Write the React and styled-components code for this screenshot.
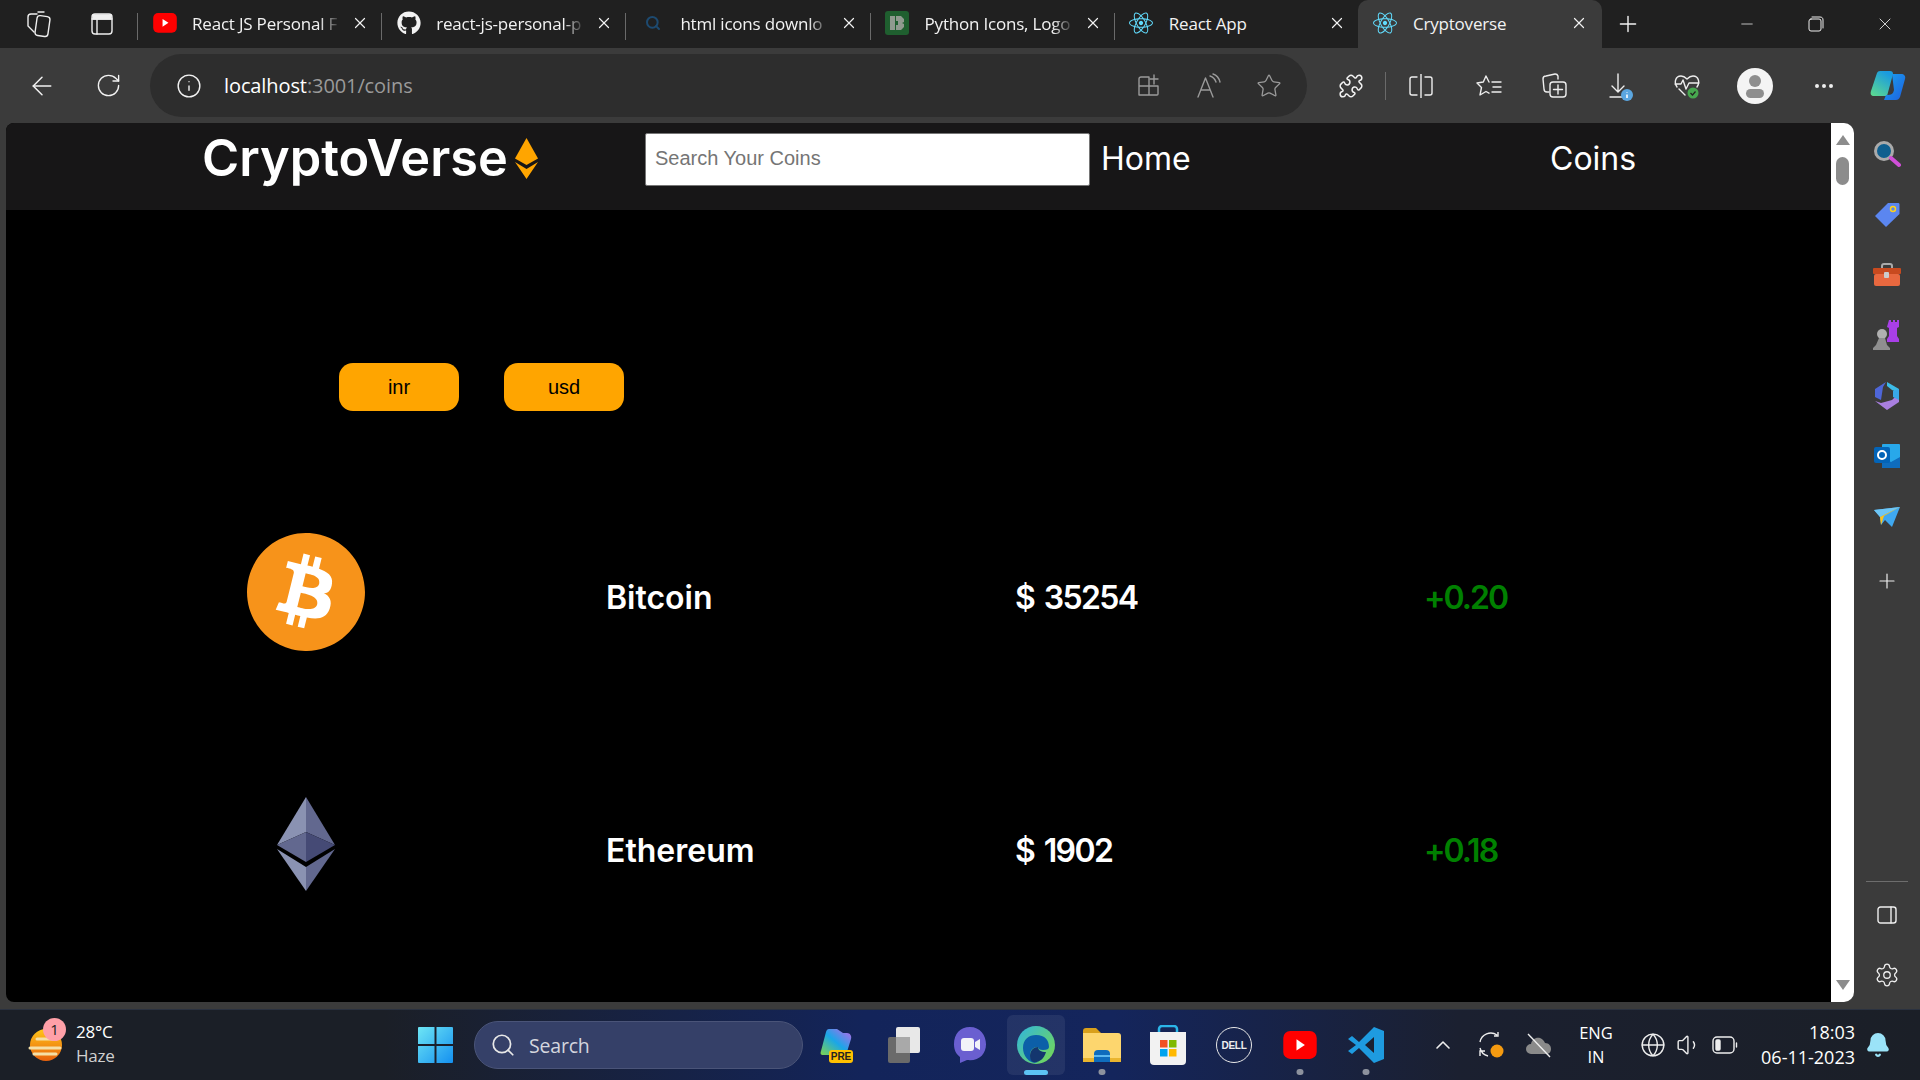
import React from "react";
import styled, { createGlobalStyle } from "styled-components";
import {
  ArrowLeft,
  RotateCw,
  Info,
  Star,
  Puzzle,
  Plus,
  X,
  Minus,
  Search,
  ChevronUp,
  Settings,
  Ellipsis,
  Globe,
  Volume1,
  Bell,
} from "lucide-react";
import { FaGithub, FaReact } from "react-icons/fa";

const GlobalStyle = createGlobalStyle`
  html, body {
    margin: 0;
    padding: 0;
    height: 100%;
    overflow: hidden;
    background: #202020;
  }
  * {
    box-sizing: border-box;
  }
`;

const UI_FONT = `"Open Sans", "Noto Sans", sans-serif`;

const Screen = styled.div`
  width: 1920px;
  height: 1080px;
  display: flex;
  flex-direction: column;
  font-family: ${UI_FONT};
  color: #fff;
`;

/* tab strip */
const TabStrip = styled.div`
  height: 48px;
  flex: none;
  background: #202020;
  display: flex;
  align-items: stretch;
`;

const StripIcons = styled.div`
  width: 137px;
  display: flex;
  align-items: center;
  padding-left: 6px;
  flex: none;
`;

const StripIcon = styled.div`
  width: 64px;
  display: flex;
  justify-content: center;
  align-items: center;
`;

const Tab = styled.div`
  width: ${(p) => p.$w || 244.2}px;
  flex: none;
  display: flex;
  align-items: center;
  padding: 0 ${(p) => (p.$active ? 11 : 9)}px 2px 15px;
  position: relative;
  background: ${(p) => (p.$active ? "#3b3b3b" : "transparent")};
  border-radius: ${(p) => (p.$active ? "10px 10px 0 0" : "0")};
  &::before {
    content: "";
    display: ${(p) => (p.$active ? "none" : "block")};
    position: absolute;
    left: 0;
    top: 13px;
    height: 27px;
    width: 1px;
    background: #6a6a6a;
  }
`;

const Favicon = styled.div`
  width: 25px;
  height: 25px;
  flex: none;
  display: flex;
  align-items: center;
  justify-content: center;
`;

const TabTitle = styled.div`
  flex: 1;
  margin: 0 4px 0 15px;
  font-size: 17px;
  white-space: nowrap;
  letter-spacing: -0.2px;
  color: #f2f2f2;
  mask-image: ${(p) =>
    p.$fade ? "linear-gradient(90deg, #000 84%, transparent 98%)" : "none"};
`;

const TabClose = styled.div`
  width: 24px;
  display: flex;
  justify-content: center;
  flex: none;
`;

const NewTab = styled.div`
  width: 52px;
  display: flex;
  align-items: center;
  justify-content: center;
  flex: none;
`;

const WindowControls = styled.div`
  margin-left: auto;
  display: flex;
  align-items: center;
  padding-right: 1px;
`;

const WinButton = styled.div`
  width: 69px;
  display: flex;
  justify-content: center;
  align-items: center;
`;

/* toolbar */
const Toolbar = styled.div`
  height: 75px;
  flex: none;
  background: #3b3b3b;
  display: flex;
  align-items: center;
`;

const NavButton = styled.div`
  width: ${(p) => p.$w}px;
  flex: none;
  display: flex;
  justify-content: center;
  align-items: center;
`;

const AddressBar = styled.div`
  width: 1157px;
  height: 63px;
  flex: none;
  margin: 0 10px 0 18px;
  border-radius: 32px;
  background: #2d2d2d;
  display: flex;
  align-items: center;
  padding-left: 26px;
  padding-right: 8px;
`;

const UrlText = styled.div`
  margin-left: 22px;
  font-size: 20px;
  letter-spacing: -0.1px;
  color: #fff;
  span {
    color: #9a9a9a;
  }
`;

const AddressIcons = styled.div`
  margin-left: auto;
  display: flex;
  align-items: center;
`;

const AddressIcon = styled.div`
  width: 60px;
  display: flex;
  justify-content: center;
`;

const ToolDivider = styled.div`
  width: 1px;
  height: 28px;
  background: #6a6a6a;
  flex: none;
`;

const Avatar = styled.div`
  width: 36px;
  height: 36px;
  border-radius: 50%;
  background: #f4f4f4;
  position: relative;
  overflow: hidden;
  &::before {
    content: "";
    position: absolute;
    left: 12px;
    top: 7px;
    width: 12px;
    height: 12px;
    border-radius: 50%;
    background: #8e8e8e;
  }
  &::after {
    content: "";
    position: absolute;
    left: 9px;
    top: 21px;
    width: 18px;
    height: 9px;
    border-radius: 5px;
    background: #8e8e8e;
  }
`;

/* middle */
const Middle = styled.div`
  flex: 1;
  min-height: 0;
  display: flex;
  background: #3b3b3b;
  padding: 0 0 7px 6px;
`;

const Page = styled.main`
  width: 1825px;
  flex: none;
  background: #000;
  overflow: hidden;
  border-radius: 8px 0 0 8px;
  font-family: Inter, "Liberation Sans", sans-serif;
`;

const SiteNav = styled.nav`
  height: 87px;
  background: #171617;
  display: flex;
  align-items: center;
  padding-left: 196px;
`;

const Logo = styled.div`
  width: 443px;
  flex: none;
  display: flex;
  align-items: center;
  gap: 7px;
  font-size: 50.5px;
  font-weight: 600;
  line-height: 1;
  position: relative;
  top: -8px;
`;

const SearchInput = styled.input`
  width: 445px;
  height: 53px;
  flex: none;
  position: relative;
  top: -7px;
  border: 1px solid #767676;
  border-radius: 2px;
  padding: 0 9px 2px;
  background: #fff;
  font-family: "Liberation Sans", Arial, sans-serif;
  font-size: 20px;
  &::placeholder {
    color: #757575;
  }
`;

const NavLink = styled.a`
  width: 449px;
  flex: none;
  font-size: 32px;
  font-weight: 400;
  position: relative;
  top: -8px;
  color: #fff;
  &:first-of-type {
    margin-left: 11px;
  }
`;

const CurrencyBar = styled.div`
  display: flex;
  gap: 45px;
  padding: 153px 0 0 333px;
`;

const CurrencyButton = styled.button`
  width: 120px;
  height: 48px;
  border: none;
  border-radius: 14px;
  background: #ffa500;
  color: #000;
  font-family: "Liberation Sans", Arial, sans-serif;
  font-size: 20px;
  padding: 0;
`;

const CoinList = styled.div`
  padding: 54px 0 0 191px;
`;

const CoinRow = styled.div`
  height: 253px;
  display: grid;
  grid-template-columns: repeat(4, 409px);
  align-items: center;
`;

const CoinIcon = styled.div`
  width: 118px;
  height: 118px;
  margin-left: 50px;
  svg {
    display: block;
    width: 100%;
    height: 100%;
  }
`;

const CoinCell = styled.div`
  padding-top: 12px;
  font-size: 32px;
  font-weight: 600;
  white-space: nowrap;
  word-spacing: ${(p) => p.$gap || 0}px;
  letter-spacing: ${(p) => p.$track || 0}px;
  color: ${(p) => (p.$gain ? "#008000" : "#fff")};
`;

/* scrollbar */
const ScrollTrack = styled.div`
  width: 23px;
  flex: none;
  background: #fff;
  border-radius: 0 10px 10px 0;
  display: flex;
  flex-direction: column;
  align-items: center;
  padding-top: 12px;
  padding-bottom: 12px;
`;

const ScrollArrow = styled.div`
  width: 0;
  height: 0;
  border-left: 7px solid transparent;
  border-right: 7px solid transparent;
  ${(p) =>
    p.$down
      ? "border-top: 10px solid #8c8c8c; margin-top: auto;"
      : "border-bottom: 10px solid #8c8c8c;"}
`;

const ScrollThumb = styled.div`
  width: 13px;
  height: 28px;
  margin-top: 12px;
  border-radius: 7px;
  background: #8c8c8c;
`;

/* edge sidebar */
const SideBar = styled.aside`
  width: 66px;
  flex: none;
  display: flex;
  flex-direction: column;
  align-items: center;
  padding-top: 1px;
`;

const SideItem = styled.div`
  height: ${(p) => p.$h || 60.4}px;
  width: 100%;
  display: flex;
  align-items: center;
  justify-content: center;
  flex: none;
`;

const SideDivider = styled.div`
  width: 42px;
  height: 1px;
  background: #6d6d6d;
  margin-top: auto;
`;

/* taskbar */
const Taskbar = styled.footer`
  height: 71px;
  flex: none;
  display: flex;
  align-items: center;
  position: relative;
  border-top: 1px solid #2b3240;
  background: linear-gradient(
    90deg,
    #1b1f27 0%,
    #1b1f27 20%,
    #13245a 45%,
    #14255c 58%,
    #1b2030 76%,
    #1b1f27 100%
  );
`;

const Weather = styled.div`
  width: 396px;
  flex: none;
  padding-left: 28px;
  display: flex;
  align-items: center;
`;

const WeatherIcon = styled.div`
  width: 36px;
  height: 36px;
  position: relative;
  flex: none;
  display: flex;
  align-items: flex-end;
`;

const WeatherBadge = styled.div`
  position: absolute;
  left: 15px;
  top: -9px;
  width: 23px;
  height: 23px;
  border-radius: 50%;
  background: #ffa0a8;
  color: #222;
  font-size: 15px;
  line-height: 23px;
  text-align: center;
`;

const WeatherText = styled.div`
  margin: -3px 0 0 12px;
  font-size: 17px;
  line-height: 24px;
  letter-spacing: -0.2px;
`;

const WeatherSub = styled.div`
  color: #d0d0d0;
`;

const StartSlot = styled.div`
  width: 78px;
  flex: none;
  display: flex;
  justify-content: center;
`;

const TaskSearch = styled.div`
  width: 329px;
  height: 48px;
  flex: none;
  border-radius: 24px;
  background: #354068;
  border: 1px solid #4a5478;
  display: flex;
  align-items: center;
  padding-left: 15px;
  gap: 13px;
  font-size: 19.5px;
  letter-spacing: -0.2px;
  color: #d4d6de;
`;

const AppRow = styled.div`
  display: flex;
  margin-left: 2px;
  flex: none;
`;

const AppSlot = styled.div`
  width: 66px;
  height: 60px;
  position: relative;
  display: flex;
  align-items: center;
  justify-content: center;
  &::before {
    content: "";
    display: ${(p) => (p.$active ? "block" : "none")};
    position: absolute;
    inset: 0 4px;
    border-radius: 6px;
    background: rgba(255, 255, 255, 0.07);
  }
  &::after {
    content: "";
    display: ${(p) => (p.$dot || p.$active ? "block" : "none")};
    position: absolute;
    bottom: 0;
    left: 50%;
    transform: translateX(-50%);
    width: ${(p) => (p.$active ? "24px" : "7px")};
    height: ${(p) => (p.$active ? "5px" : "6px")};
    border-radius: 3px;
    background: ${(p) => (p.$active ? "#5cc3f5" : "#8d929e")};
  }
  svg {
    position: relative;
    z-index: 1;
  }
`;

const DellMark = styled.div`
  width: 36px;
  height: 36px;
  border-radius: 50%;
  border: 1.5px solid #e8e8e8;
  display: flex;
  align-items: center;
  justify-content: center;
  font-family: "Liberation Sans", sans-serif;
  font-size: 10px;
  font-weight: 700;
  letter-spacing: -0.3px;
  color: #eee;
`;

const Tray = styled.div`
  margin-left: auto;
  padding-right: 19px;
  display: flex;
  align-items: center;
  flex: none;
`;

const TraySlot = styled.div`
  width: ${(p) => p.$w || 48}px;
  flex: none;
  display: flex;
  align-items: center;
  justify-content: center;
`;

const Lang = styled.div`
  width: 66px;
  margin-right: 6px;
  flex: none;
  text-align: center;
  font-size: 16.5px;
  line-height: 24px;
`;

const Clock = styled.div`
  width: 112px;
  flex: none;
  text-align: right;
  font-size: 18px;
  line-height: 25px;
`;

/* drawings */
const Youtube = ({ size = 24 }) => (
  <svg width={size} height={size * 0.82} viewBox="0 0 24 20">
    <rect width="24" height="20" rx="5" fill="#f00" />
    <path d="M9.5 6l6 4-6 4z" fill="#fff" />
  </svg>
);

const BitcoinLogo = () => (
  <svg viewBox="0 0 64 64">
    <path
      fill="#f7931a"
      d="M63.033,39.744c-4.274,17.143-21.637,27.576-38.782,23.301C7.116,58.768-3.317,41.404,0.959,24.262 C5.23,7.117,22.594-3.317,39.734,0.957C56.879,5.23,67.311,22.596,63.032,39.744L63.033,39.744z"
    />
    <path
      fill="#fff"
      d="M46.103,27.444c0.637-4.258-2.605-6.547-7.038-8.074l1.438-5.768l-3.511-0.875l-1.4,5.616 c-0.923-0.23-1.871-0.447-2.813-0.662l1.41-5.653l-3.509-0.875l-1.439,5.766c-0.764-0.174-1.514-0.346-2.242-0.527l0.004-0.018 l-4.842-1.209l-0.934,3.75c0,0,2.605,0.597,2.55,0.634c1.422,0.355,1.679,1.296,1.636,2.042l-1.638,6.571 c0.098,0.025,0.225,0.061,0.365,0.117c-0.117-0.029-0.242-0.061-0.371-0.092l-2.296,9.205c-0.174,0.432-0.615,1.08-1.609,0.834 c0.035,0.051-2.552-0.637-2.552-0.637l-1.743,4.019l4.569,1.139c0.85,0.213,1.683,0.436,2.503,0.646l-1.453,5.834l3.507,0.875 l1.439-5.772c0.958,0.26,1.888,0.5,2.798,0.726l-1.434,5.745l3.511,0.875l1.453-5.823c5.987,1.133,10.489,0.676,12.384-4.739 c1.527-4.36-0.076-6.875-3.226-8.515C44.008,32.936,45.742,31.007,46.103,27.444L46.103,27.444z M38.081,38.693 c-1.085,4.36-8.426,2.003-10.806,1.412l1.928-7.729C31.583,32.97,39.215,34.147,38.081,38.693z M39.167,27.381 c-0.99,3.966-7.1,1.951-9.082,1.457l1.748-7.01C33.815,22.322,40.198,23.244,39.167,27.381z"
    />
  </svg>
);

const EthereumLogo = () => (
  <svg viewBox="0 1 118 118">
    <polygon points="59,12 30,60 59,47" fill="#8a92b2" />
    <polygon points="59,12 88,60 59,47" fill="#62688f" />
    <polygon points="30,60 59,47 59,77" fill="#62688f" />
    <polygon points="88,60 59,47 59,77" fill="#454a75" />
    <polygon points="30,64 59,82 59,106" fill="#8a92b2" />
    <polygon points="88,64 59,82 59,106" fill="#62688f" />
  </svg>
);

const LogoDiamond = () => (
  <svg width="23" height="41" viewBox="0 0 23 41">
    <polygon points="11.5,0 0,20.5 11.5,27 23,20.5" fill="#ffa500" />
    <polygon points="0,24 11.5,31 23,24 11.5,41" fill="#ffa500" />
  </svg>
);

const line = { fill: "none", stroke: "#eee", strokeWidth: 1.4, strokeLinecap: "round", strokeLinejoin: "round" };
const dim = { ...line, stroke: "#9a9a9a" };

const Workspaces = () => (
  <svg width="26" height="28" viewBox="0 0 26 28" {...line}>
    <rect x="11" y="6" width="13" height="20" rx="3" transform="rotate(8 17 16)" />
    <path d="M9 22L3 16V7c0-2 1-3 3-3h6M13 2h6" />
  </svg>
);

const TabPanel = () => (
  <svg width="22" height="24" viewBox="0 0 22 24" {...line}>
    <rect x="1" y="2" width="20" height="20" rx="3" />
    <path d="M1 7h20M6 7v15" />
    <path d="M2 3h18v4H2z" fill="#eee" />
  </svg>
);

const RestoreIcon = () => (
  <svg width="16" height="16" viewBox="0 0 16 16" {...line} strokeWidth="1">
    <rect x="1" y="3" width="12" height="12" rx="2" />
    <path d="M4 1h8c2 0 3 1 3 3v8" />
  </svg>
);

const TabGroupIcon = () => (
  <svg width="22" height="24" viewBox="0 0 22 24" {...dim}>
    <path d="M11 3H3a2 2 0 0 0-2 2v16h18a1 1 0 0 0 1-1v-8H1M11 3v18" />
    <path d="M16 1v9M12 5h8" />
  </svg>
);

const ReadAloud = () => (
  <svg width="26" height="26" viewBox="0 0 26 26" {...dim}>
    <path d="M2 24L9.5 5 17 24M5 17h9" />
    <path d="M14 3c3 1 5 3 6 6M17 1c3 1 6 4 7 8" />
  </svg>
);

const SplitIcon = () => (
  <svg width="24" height="24" viewBox="0 0 24 24" {...line}>
    <path d="M8 3H3a2 2 0 0 0-2 2v14a2 2 0 0 0 2 2h5M16 3h5a2 2 0 0 1 2 2v14a2 2 0 0 1-2 2h-5M12 0v24" />
  </svg>
);

const FavoritesIcon = () => (
  <svg width="26" height="24" viewBox="0 0 26 24" {...line}>
    <path d="M13 8L10 2 7.3 8 1 9l4.5 4.500L4 21l6-3.500 3 1.700" />
    <path d="M16 8h9M17 13h8M16 18h9" />
  </svg>
);

const CollectionsIcon = () => (
  <svg width="26" height="26" viewBox="0 0 26 26" {...line}>
    <path d="M7 19l-2 0a3 3 0 0 1-3-3L1 6a3 3 0 0 1 3-3l9-2a3 3 0 0 1 3 2v3" />
    <rect x="8" y="9" width="16" height="15" rx="3" />
    <path d="M16 12v9M11.5 16.5h9" />
  </svg>
);

const DownloadIcon = () => (
  <svg width="28" height="30" viewBox="-2 -2 28 30">
    <path d="M9 1v17M3 13l6 6 6-6M1 24h14" {...line} />
    <circle cx="18" cy="22" r="6" fill="#5ba6e0" />
    <path d="M18 19.500v.5M18 21.500V25" stroke="#fff" strokeWidth="1.6" />
  </svg>
);

const HealthIcon = () => (
  <svg width="26" height="26" viewBox="0 0 26 26">
    <path
      d="M3 14C0 10 1 3 7 3c3 0 4 1 6 3 2-2 3-3 6-3 6 0 7 7 4 11M1 11h6l2-4 3 9 3-6h10M5 16l6 6"
      {...line}
    />
    <circle cx="19" cy="20" r="5.5" fill="#47a84f" />
    <path d="M16.5 20l2 2 3-3.5" fill="none" stroke="#222" strokeWidth="1.2" />
  </svg>
);

const CopilotLogo = () => (
  <svg width="36" height="33" viewBox="0 0 36 33">
    <defs>
      <linearGradient id="cpA" x1="0" y1="1" x2="0.6" y2="0">
        <stop offset="0" stopColor="#5fdc8c" />
        <stop offset="1" stopColor="#1a9be0" />
      </linearGradient>
      <linearGradient id="cpB" x1="0" y1="0" x2="1" y2="1">
        <stop offset="0" stopColor="#1aa2ee" />
        <stop offset="1" stopColor="#1d5fe0" />
      </linearGradient>
    </defs>
    <path d="M10 2h10c2 0 3 1 3 3l-6 22H4c-3 0-4-2-3-5L7 4c.5-1.300 1.500-2 3-2z" fill="url(#cpA)" />
    <path d="M22 5h9c3 0 5 2 4 5l-5 18c-1 2-2 3-4 3H14l2-5c6 0 7-1 8-5z" fill="url(#cpB)" />
  </svg>
);

const WeatherSun = () => (
  <svg width="34" height="36" viewBox="0 0 34 36">
    <defs>
      <linearGradient id="sunG" x1="0" y1="0" x2="0" y2="1">
        <stop offset="0" stopColor="#ffc61a" />
        <stop offset="1" stopColor="#e8610c" />
      </linearGradient>
    </defs>
    <circle cx="18" cy="18" r="16" fill="url(#sunG)" />
    <path d="M9 12h18M2 21h30M6 27h22" stroke="#f5dfa6" strokeWidth="3" strokeLinecap="round" />
  </svg>
);

const WindowsLogo = () => (
  <svg width="35" height="36" viewBox="0 0 35 36">
    <defs>
      <linearGradient id="winG" x1="0" y1="0" x2="1" y2="1">
        <stop offset="0" stopColor="#6ee6f5" />
        <stop offset="1" stopColor="#1490f0" />
      </linearGradient>
    </defs>
    <path d="M0 1a1 1 0 0 1 1-1h15.500v17H0zM18.500 0H34a1 1 0 0 1 1 1v16H18.500zM0 19h16.500v17H1a1 1 0 0 1-1-1zM18.500 19H35v16a1 1 0 0 1-1 1H18.500z" fill="url(#winG)" />
  </svg>
);

const CopilotPre = () => (
  <svg width="36" height="36" viewBox="0 0 36 36">
    <defs>
      <linearGradient id="preG" x1="0" y1="1" x2="1" y2="0">
        <stop offset="0" stopColor="#7fd44c" />
        <stop offset="0.5" stopColor="#1aa6e8" />
        <stop offset="1" stopColor="#c264e8" />
      </linearGradient>
    </defs>
    <path d="M9 2h8l6 4 4 0c3 0 5 3 4 6l-5 16H3c-2 0-3-1-2-4L6 5c.5-2 1.500-3 3-3z" fill="url(#preG)" />
    <rect x="9" y="23" width="24" height="13" rx="3" fill="#ffc000" />
    <text x="21" y="33" textAnchor="middle" fontSize="10" fontWeight="700" fontFamily="Liberation Sans" fill="#222">PRE</text>
  </svg>
);

const TaskView = () => (
  <svg width="36" height="36" viewBox="0 0 36 36">
    <rect x="2" y="10" width="22" height="26" rx="2" fill="#6a6a6a" />
    <rect x="10" y="0" width="24" height="26" rx="2" fill="#e8e8e8" />
    <rect x="10" y="10" width="14" height="16" fill="#a9a9a9" />
  </svg>
);

const TeamsIcon = () => (
  <svg width="32" height="36" viewBox="0 0 32 36">
    <path d="M16 0C6 0 0 7 0 17c0 6 2 10 6 13l0 6 7-3c1 0 2 .2 3 .2 10 0 16-7 16-16S26 0 16 0z" fill="#6a5fd0" />
    <rect x="7" y="11" width="13" height="13" rx="3" fill="#f2f2f8" />
    <path d="M21 15l5-3v11l-5-3z" fill="#f2f2f8" />
  </svg>
);

const EdgeIcon = () => (
  <svg width="38" height="38" viewBox="0 0 38 38">
    <defs>
      <linearGradient id="edgeA" x1="0" y1="0" x2="1" y2="0.8">
        <stop offset="0" stopColor="#2fb5e0" />
        <stop offset="1" stopColor="#72d65a" />
      </linearGradient>
    </defs>
    <circle cx="19" cy="19" r="19" fill="url(#edgeA)" />
    <path d="M6 22c0-9 6-13 13-13 9 0 13 5 13 12 0 2-2 3-6 3-3 0-5-1-5-3-5 0-8 3-8 8 0 4 3 7 8 8-9 1-15-7-15-15z" fill="#0c5fa8" />
    <path d="M13 30c0-6 4-9 8-9 0 3 3 5 8 5-2 7-7 11-13 10-2-1-3-3-3-6z" fill="#14366e" />
  </svg>
);

const FolderIcon = () => (
  <svg width="38" height="34" viewBox="0 0 38 34">
    <path d="M0 3a3 3 0 0 1 3-3h10l5 5H0z" fill="#d9a01b" />
    <path d="M0 5h35a3 3 0 0 1 3 3v26H0z" fill="#fdd66e" />
    <path d="M0 30h38v4H0z" fill="#eab52f" />
    <path d="M11 34v-8a4 4 0 0 1 4-4h8a4 4 0 0 1 4 4v8z" fill="#0f6cbd" />
    <path d="M11 28h16" stroke="#5cb8f0" strokeWidth="2" />
  </svg>
);

const StoreIcon = () => (
  <svg width="36" height="40" viewBox="0 0 36 40">
    <path d="M9 8V4a3 3 0 0 1 3-3h12a3 3 0 0 1 3 3v4" fill="none" stroke="#2bb5e8" strokeWidth="2.500" />
    <path d="M0 7h36v29a4 4 0 0 1-4 4H4a4 4 0 0 1-4-4z" fill="#f2f2f2" />
    <rect x="10" y="15" width="7.500" height="7.500" fill="#f25022" />
    <rect x="19" y="15" width="7.500" height="7.500" fill="#7fba00" />
    <rect x="10" y="24" width="7.500" height="7.500" fill="#00a4ef" />
    <rect x="19" y="24" width="7.500" height="7.500" fill="#ffb900" />
  </svg>
);

const VsCode = () => (
  <svg width="36" height="36" viewBox="0 0 36 36">
    <path d="M26 0l10 4v28l-10 4-15-15-7 6-4-3 8-6-8-6 4-3 7 6z" fill="#1e9be0" />
    <path d="M26 10l-9 8 9 8z" fill="#1b2030" />
  </svg>
);

const SyncIcon = () => (
  <svg width="28" height="28" viewBox="0 0 28 28">
    <path d="M3 11a11 11 0 0 1 17-7M21 1v4h-4M3 17a11 11 0 0 0 8 8M3 25v-5h5" fill="none" stroke="#eee" strokeWidth="1.400" />
    <circle cx="20" cy="20" r="6.500" fill="#f59a10" />
  </svg>
);

const CloudOff = () => (
  <svg width="28" height="26" viewBox="0 0 28 26">
    <path d="M6 22a5 5 0 0 1 0-10c1-5 5-7 9-6 3 1 4 3 5 5 4 0 6 3 6 6s-2 5-5 5z" fill="#8a8a8a" />
    <path d="M3 2l22 23" stroke="#eee" strokeWidth="1.400" />
  </svg>
);

const BatteryIcon = () => (
  <svg width="26" height="20" viewBox="0 0 26 20" {...line}>
    <rect x="1" y="2" width="21" height="16" rx="4" />
    <rect x="4" y="5" width="4" height="10" rx="1" fill="#eee" />
    <path d="M24.500 8v4" />
  </svg>
);

const PythonFavicon = () => (
  <svg width="24" height="24" viewBox="0 0 24 24">
    <rect width="24" height="24" rx="3" fill="#1f5f2f" />
    <path d="M5 5h5v14H5zM11 5h5l3 3v3l-2 1 2 1v3l-3 3h-5v-5h2v-4h-2z" fill="#8f9a8f" />
  </svg>
);

/* colored sidebar icons */
const SideSearch = () => (
  <svg width="28" height="28" viewBox="0 0 28 28">
    <circle cx="11" cy="11" r="8.500" fill="#0f5f8f" stroke="#aaa" strokeWidth="3" />
    <path d="M18 18l8 7" stroke="#d04fd8" strokeWidth="4" strokeLinecap="round" />
  </svg>
);

const SideTag = () => (
  <svg width="26" height="26" viewBox="0 0 26 26">
    <path d="M14 1h10c1 0 1.500.5 1.500 1.500V12L12 25 1 14z" fill="#5b86f0" />
    <circle cx="19" cy="7" r="2.500" fill="none" stroke="#ffd21a" strokeWidth="1.500" />
  </svg>
);

const SideTools = () => (
  <svg width="28" height="24" viewBox="0 0 28 24">
    <path d="M9 6V3a2 2 0 0 1 2-2h6a2 2 0 0 1 2 2v3" fill="none" stroke="#aaa" strokeWidth="2" />
    <rect y="5" width="28" height="6" rx="1" fill="#c84a1f" />
    <rect x="1" y="11" width="26" height="12" rx="2" fill="#e8683f" />
    <rect x="11" y="9" width="5" height="6" rx="1" fill="#ccc" />
  </svg>
);

const SideGames = () => (
  <svg width="28" height="30" viewBox="0 0 28 30">
    <path d="M17 0h2v2h2V0h2v2h2V0h2v7l-2 1v8l2 3v3H15v-3l2-3V8l-2-1z" transform="translate(-1 0)" fill="#a93fe8" />
    <circle cx="9" cy="14" r="5" fill="#b0b0b0" />
    <path d="M6 18h6l2 7 3 3v2H0v-2l3-3z" fill="#8f8f8f" />
  </svg>
);

const SideM365 = () => (
  <svg width="26" height="28" viewBox="0 0 26 28">
    <path d="M13 0l12 7v4l-7-3-5-4z" fill="#3dbce8" />
    <path d="M1 7l11-7-3 5-2 13-6-3z" fill="#4e66d8" />
    <path d="M1 19l6 2 11-3 7-7v9l-12 8z" fill="#a97fe0" />
    <path d="M25 7v11l-6-3V9z" fill="#39a8e8" />
  </svg>
);

const SideOutlook = () => (
  <svg width="26" height="26" viewBox="0 0 26 26">
    <rect x="8" y="1" width="18" height="24" rx="1" fill="#28a8ea" />
    <path d="M8 14l9 5 9-5v11H8z" fill="#0f6cbd" />
    <rect y="4" width="16" height="16" rx="2" fill="#0364b8" />
    <circle cx="8" cy="12" r="4" fill="none" stroke="#fff" strokeWidth="2" />
  </svg>
);

const SideSend = () => (
  <svg width="26" height="20" viewBox="0 0 26 20">
    <path d="M0 3l26-3-8 20-7-7-4 5-1-8z" fill="#3fa8f0" />
    <path d="M0 3l26-3L6 10z" fill="#6ec6f5" />
    <path d="M26 0L6 10l1 8 3-9z" fill="#ffc21a" />
  </svg>
);

const SidePanel = () => (
  <svg width="20" height="18" viewBox="0 0 20 18" {...line}>
    <rect x="1" y="1" width="18" height="16" rx="2.500" />
    <path d="M14 1v16" />
  </svg>
);

const tabs = [
  { title: "React JS Personal F", icon: <Youtube size={24} />, fade: true },
  { title: "react-js-personal-p", icon: <FaGithub size={24} color="#f2f2f2" />, fade: true },
  { title: "html icons downlo", icon: <Search size={16} color="#1d4a70" strokeWidth={3} />, fade: true },
  { title: "Python Icons, Logo", icon: <PythonFavicon />, fade: true },
  { title: "React App", icon: <FaReact size={24} color="#61dafb" /> },
];

const coins = [
  { name: "Bitcoin", price: "$ 35254", change: "+0.20", logo: <BitcoinLogo /> },
  { name: "Ethereum", price: "$ 1902", change: "+0.18", logo: <EthereumLogo /> },
];

const sideItems = [
  <SideSearch />,
  <SideTag />,
  <SideTools />,
  <SideGames />,
  <SideM365 />,
  <SideOutlook />,
  <SideSend />,
  <Plus size={24} color="#eee" strokeWidth={1.2} />,
];

const apps = [
  { key: "copilot", icon: <CopilotPre /> },
  { key: "taskview", icon: <TaskView /> },
  { key: "teams", icon: <TeamsIcon /> },
  { key: "edge", icon: <EdgeIcon />, active: true },
  { key: "files", icon: <FolderIcon />, dot: true },
  { key: "store", icon: <StoreIcon /> },
  { key: "dell", icon: <DellMark>DELL</DellMark> },
  { key: "youtube", icon: <Youtube size={34} />, dot: true },
  { key: "vscode", icon: <VsCode />, dot: true },
];

const App = () => {
  return (
    <Screen>
      <GlobalStyle />
      <TabStrip>
        <StripIcons>
          <StripIcon>
            <Workspaces />
          </StripIcon>
          <StripIcon>
            <TabPanel />
          </StripIcon>
        </StripIcons>
        {tabs.map((tab) => (
          <Tab key={tab.title}>
            <Favicon>{tab.icon}</Favicon>
            <TabTitle $fade={tab.fade}>{tab.title}</TabTitle>
            <TabClose>
              <X size={18} strokeWidth={1.6} color="#f2f2f2" />
            </TabClose>
          </Tab>
        ))}
        <Tab $active $w={244}>
          <Favicon>
            <FaReact size={24} color="#61dafb" />
          </Favicon>
          <TabTitle>Cryptoverse</TabTitle>
          <TabClose>
            <X size={18} strokeWidth={1.6} color="#f2f2f2" />
          </TabClose>
        </Tab>
        <NewTab>
          <Plus size={26} strokeWidth={1.3} color="#f2f2f2" />
        </NewTab>
        <WindowControls>
          <WinButton>
            <Minus size={18} strokeWidth={1} color="#f2f2f2" />
          </WinButton>
          <WinButton>
            <RestoreIcon />
          </WinButton>
          <WinButton>
            <X size={20} strokeWidth={1} color="#f2f2f2" />
          </WinButton>
        </WindowControls>
      </TabStrip>

      <Toolbar>
        <NavButton $w={84}>
          <ArrowLeft size={30} strokeWidth={1.2} color="#f2f2f2" />
        </NavButton>
        <NavButton $w={48}>
          <RotateCw size={27} strokeWidth={1.2} color="#f2f2f2" />
        </NavButton>
        <AddressBar>
          <Info size={26} strokeWidth={1.3} color="#f2f2f2" />
          <UrlText>
            localhost<span>:3001/coins</span>
          </UrlText>
          <AddressIcons>
            <AddressIcon>
              <TabGroupIcon />
            </AddressIcon>
            <AddressIcon>
              <ReadAloud />
            </AddressIcon>
            <AddressIcon>
              <Star size={26} strokeWidth={1.2} color="#9a9a9a" />
            </AddressIcon>
          </AddressIcons>
        </AddressBar>
        <NavButton $w={68}>
          <Puzzle size={26} strokeWidth={1.4} color="#f2f2f2" />
        </NavButton>
        <ToolDivider />
        <NavButton $w={70}>
          <SplitIcon />
        </NavButton>
        <NavButton $w={66}>
          <FavoritesIcon />
        </NavButton>
        <NavButton $w={66}>
          <CollectionsIcon />
        </NavButton>
        <NavButton $w={66}>
          <DownloadIcon />
        </NavButton>
        <NavButton $w={66}>
          <HealthIcon />
        </NavButton>
        <NavButton $w={70}>
          <Avatar />
        </NavButton>
        <NavButton $w={68}>
          <Ellipsis size={24} strokeWidth={2} color="#eee" />
        </NavButton>
        <NavButton $w={60}>
          <CopilotLogo />
        </NavButton>
      </Toolbar>

      <Middle>
        <Page>
          <SiteNav>
            <Logo>
              CryptoVerse
              <LogoDiamond />
            </Logo>
            <SearchInput placeholder="Search Your Coins" />
            <NavLink>Home</NavLink>
            <NavLink>Coins</NavLink>
          </SiteNav>
          <CurrencyBar>
            <CurrencyButton>inr</CurrencyButton>
            <CurrencyButton>usd</CurrencyButton>
          </CurrencyBar>
          <CoinList>
            {coins.map((coin) => (
              <CoinRow key={coin.name}>
                <CoinIcon>{coin.logo}</CoinIcon>
                <CoinCell>{coin.name}</CoinCell>
                <CoinCell $track={-1.6} $gap={3}>
                  {coin.price}
                </CoinCell>
                <CoinCell $gain $track={-2}>
                  {coin.change}
                </CoinCell>
              </CoinRow>
            ))}
          </CoinList>
        </Page>
        <ScrollTrack>
          <ScrollArrow />
          <ScrollThumb />
          <ScrollArrow $down />
        </ScrollTrack>
        <SideBar>
          {sideItems.map((icon, i) => (
            <SideItem key={i} $h={i === sideItems.length - 1 ? 68 : undefined}>
              {icon}
            </SideItem>
          ))}
          <SideDivider />
          <SideItem $h={65}>
            <SidePanel />
          </SideItem>
          <SideItem $h={55}>
            <Settings size={26} strokeWidth={1.2} color="#eee" />
          </SideItem>
        </SideBar>
      </Middle>

      <Taskbar>
        <Weather>
          <WeatherIcon>
            <WeatherSun />
            <WeatherBadge>1</WeatherBadge>
          </WeatherIcon>
          <WeatherText>
            28°C
            <WeatherSub>Haze</WeatherSub>
          </WeatherText>
        </Weather>
        <StartSlot>
          <WindowsLogo />
        </StartSlot>
        <TaskSearch>
          <Search size={26} strokeWidth={1.6} color="#e8e8e8" />
          Search
        </TaskSearch>
        <AppRow>
          {apps.map((app) => (
            <AppSlot key={app.key} $active={app.active} $dot={app.dot}>
              {app.icon}
            </AppSlot>
          ))}
        </AppRow>
        <Tray>
          <TraySlot>
            <ChevronUp size={24} strokeWidth={1.6} color="#eee" />
          </TraySlot>
          <TraySlot>
            <SyncIcon />
          </TraySlot>
          <TraySlot>
            <CloudOff />
          </TraySlot>
          <Lang>
            ENG
            <br />
            IN
          </Lang>
          <TraySlot $w={36}>
            <Globe size={26} strokeWidth={1.3} color="#eee" />
          </TraySlot>
          <TraySlot $w={36}>
            <Volume1 size={26} strokeWidth={1.3} color="#eee" />
          </TraySlot>
          <TraySlot $w={36}>
            <BatteryIcon />
          </TraySlot>
          <Clock>
            18:03
            <br />
            06-11-2023
          </Clock>
          <TraySlot $w={46}>
            <Bell size={26} fill="#9be3f8" color="#9be3f8" />
          </TraySlot>
        </Tray>
      </Taskbar>
    </Screen>
  );
};

export default App;
